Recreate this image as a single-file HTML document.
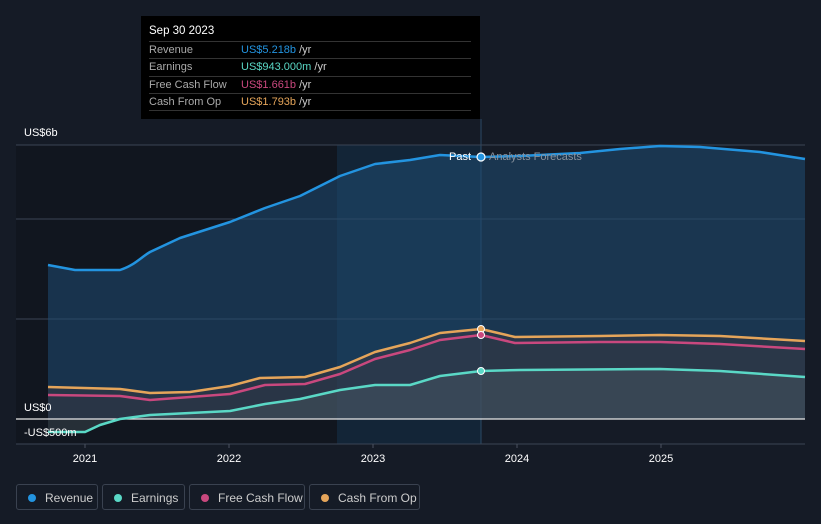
<!DOCTYPE html>
<html><head><meta charset="utf-8"><style>
body{margin:0;background:#151b26;font-family:"Liberation Sans",sans-serif;width:821px;height:524px;overflow:hidden;position:relative}
.tt{position:absolute;left:141px;top:16px;width:339px;height:103px;background:#000;color:#fff;font-size:11px}
.tt .h{position:absolute;left:8px;top:9px;font-size:11.5px}
.tt .r{position:absolute;left:8px;width:322px;height:17px;border-top:1px solid #333;line-height:17px;color:#aaa}
.tt .r span{position:absolute;left:92px}
.leg{position:absolute;top:484px;height:26px;border:1px solid #3a4250;border-radius:3px;color:#ccc;font-size:12px;line-height:26px;box-sizing:border-box}
.leg i{position:absolute;left:11px;top:9px;width:8px;height:8px;border-radius:50%}
.leg b{font-weight:normal;position:absolute;left:28px}
</style></head><body>
<svg width="821" height="524" style="position:absolute;left:0;top:0">
<rect x="16" y="145" width="321" height="299" fill="#11161f"/>
<rect x="337" y="145" width="144" height="299" fill="#132537"/>
<line x1="481" y1="119" x2="481" y2="444" stroke="#2b4a66"/>
<g stroke="#3a4454" stroke-width="1"><line x1="16" y1="145" x2="805" y2="145"/><line x1="16" y1="219" x2="805" y2="219"/><line x1="16" y1="319" x2="805" y2="319"/><line x1="16" y1="444" x2="805" y2="444"/></g>
<path d="M48,265 L75,270 L120,270 C135,265 140,258 150,252 L180,238 L230,222 L265,208 L300,196 L340,176 L375,164 L410,160 L440,155 L481,157 L520,156 L580,153 L620,149 L660,146 L700,147 L760,152 L805,159 L805,419 L48,419Z" fill="#1f4c72" opacity="0.55"/>
<path d="M48,387 L120,389 L150,393 L190,392 L230,386 L260,378 L305,377 L340,367 L375,352 L410,343 L440,333 L481,329 L515,337 L600,336 L660,335 L720,336 L805,341 L805,419 L48,419Z" fill="#4a3a3a" opacity="0.35"/>
<path d="M48,432 L85,432 L100,425 L120,419 L150,415 L190,413 L230,411 L265,404 L300,399 L340,390 L375,385 L410,385 L440,376 L481,371 L520,370 L660,369 L720,371 L805,377 L805,419 L48,419Z" fill="#5a6a70" opacity="0.3"/>
<line x1="16" y1="419" x2="805" y2="419" stroke="#e8e8e8" stroke-width="1.2"/>
<g fill="none" stroke-width="2.5" stroke-linejoin="round">
<path d="M48,265 L75,270 L120,270 C135,265 140,258 150,252 L180,238 L230,222 L265,208 L300,196 L340,176 L375,164 L410,160 L440,155 L481,157 L520,156 L580,153 L620,149 L660,146 L700,147 L760,152 L805,159" stroke="#2394e0"/>
<path d="M48,387 L120,389 L150,393 L190,392 L230,386 L260,378 L305,377 L340,367 L375,352 L410,343 L440,333 L481,329 L515,337 L600,336 L660,335 L720,336 L805,341" stroke="#e5a55a"/>
<path d="M48,395 L120,396 L150,400 L190,397 L230,394 L265,385 L305,384 L340,374 L375,359 L410,350 L440,340 L481,335 L515,343 L600,342 L660,342 L720,344 L805,349" stroke="#c9487e"/>
<path d="M48,432 L85,432 L100,425 L120,419 L150,415 L190,413 L230,411 L265,404 L300,399 L340,390 L375,385 L410,385 L440,376 L481,371 L520,370 L660,369 L720,371 L805,377" stroke="#5ad8c6"/>
</g>
<circle cx="481" cy="157" r="4" fill="#2394e0" stroke="#fff" stroke-width="1.2"/>
<circle cx="481" cy="329" r="3.5" fill="#e5a55a" stroke="#fff" stroke-width="1"/>
<circle cx="481" cy="335" r="3.5" fill="#c9487e" stroke="#fff" stroke-width="1"/>
<circle cx="481" cy="371" r="3.5" fill="#5ad8c6" stroke="#fff" stroke-width="1"/>
<g font-size="11" font-family="Liberation Sans,sans-serif">
<text x="24" y="136" fill="#fff">US$6b</text>
<text x="24" y="411" fill="#fff">US$0</text>
<text x="24" y="436" fill="#fff">-US$500m</text>
<text x="449" y="160" fill="#fff">Past</text>
<text x="489" y="160" fill="#8a939e">Analysts Forecasts</text>
<g fill="#fff" text-anchor="middle"><text x="85" y="462">2021</text><text x="229" y="462">2022</text><text x="373" y="462">2023</text><text x="517" y="462">2024</text><text x="661" y="462">2025</text></g>
</g>
<g stroke="#4a5260"><line x1="85" y1="444" x2="85" y2="448"/><line x1="229" y1="444" x2="229" y2="448"/><line x1="373" y1="444" x2="373" y2="448"/><line x1="517" y1="444" x2="517" y2="448"/><line x1="661" y1="444" x2="661" y2="448"/></g>
</svg>
<div class="tt"><div class="h">Sep 30 2023</div>
<div class="r" style="top:25px">Revenue<span style="color:#2394e0">US$5.218b <em style="font-style:normal;color:#ccc">/yr</em></span></div>
<div class="r" style="top:42px">Earnings<span style="color:#5ad8c6">US$943.000m <em style="font-style:normal;color:#ccc">/yr</em></span></div>
<div class="r" style="top:60px">Free Cash Flow<span style="color:#c9487e">US$1.661b <em style="font-style:normal;color:#ccc">/yr</em></span></div>
<div class="r" style="top:77px">Cash From Op<span style="color:#e5a55a">US$1.793b <em style="font-style:normal;color:#ccc">/yr</em></span></div>
<div class="r" style="top:94px;height:0"></div>
</div>
<div class="leg" style="left:16px;width:82px"><i style="background:#2394e0"></i><b>Revenue</b></div>
<div class="leg" style="left:102px;width:83px"><i style="background:#5ad8c6"></i><b>Earnings</b></div>
<div class="leg" style="left:189px;width:116px"><i style="background:#c9487e"></i><b>Free Cash Flow</b></div>
<div class="leg" style="left:309px;width:111px"><i style="background:#e5a55a"></i><b>Cash From Op</b></div>
</body></html>
